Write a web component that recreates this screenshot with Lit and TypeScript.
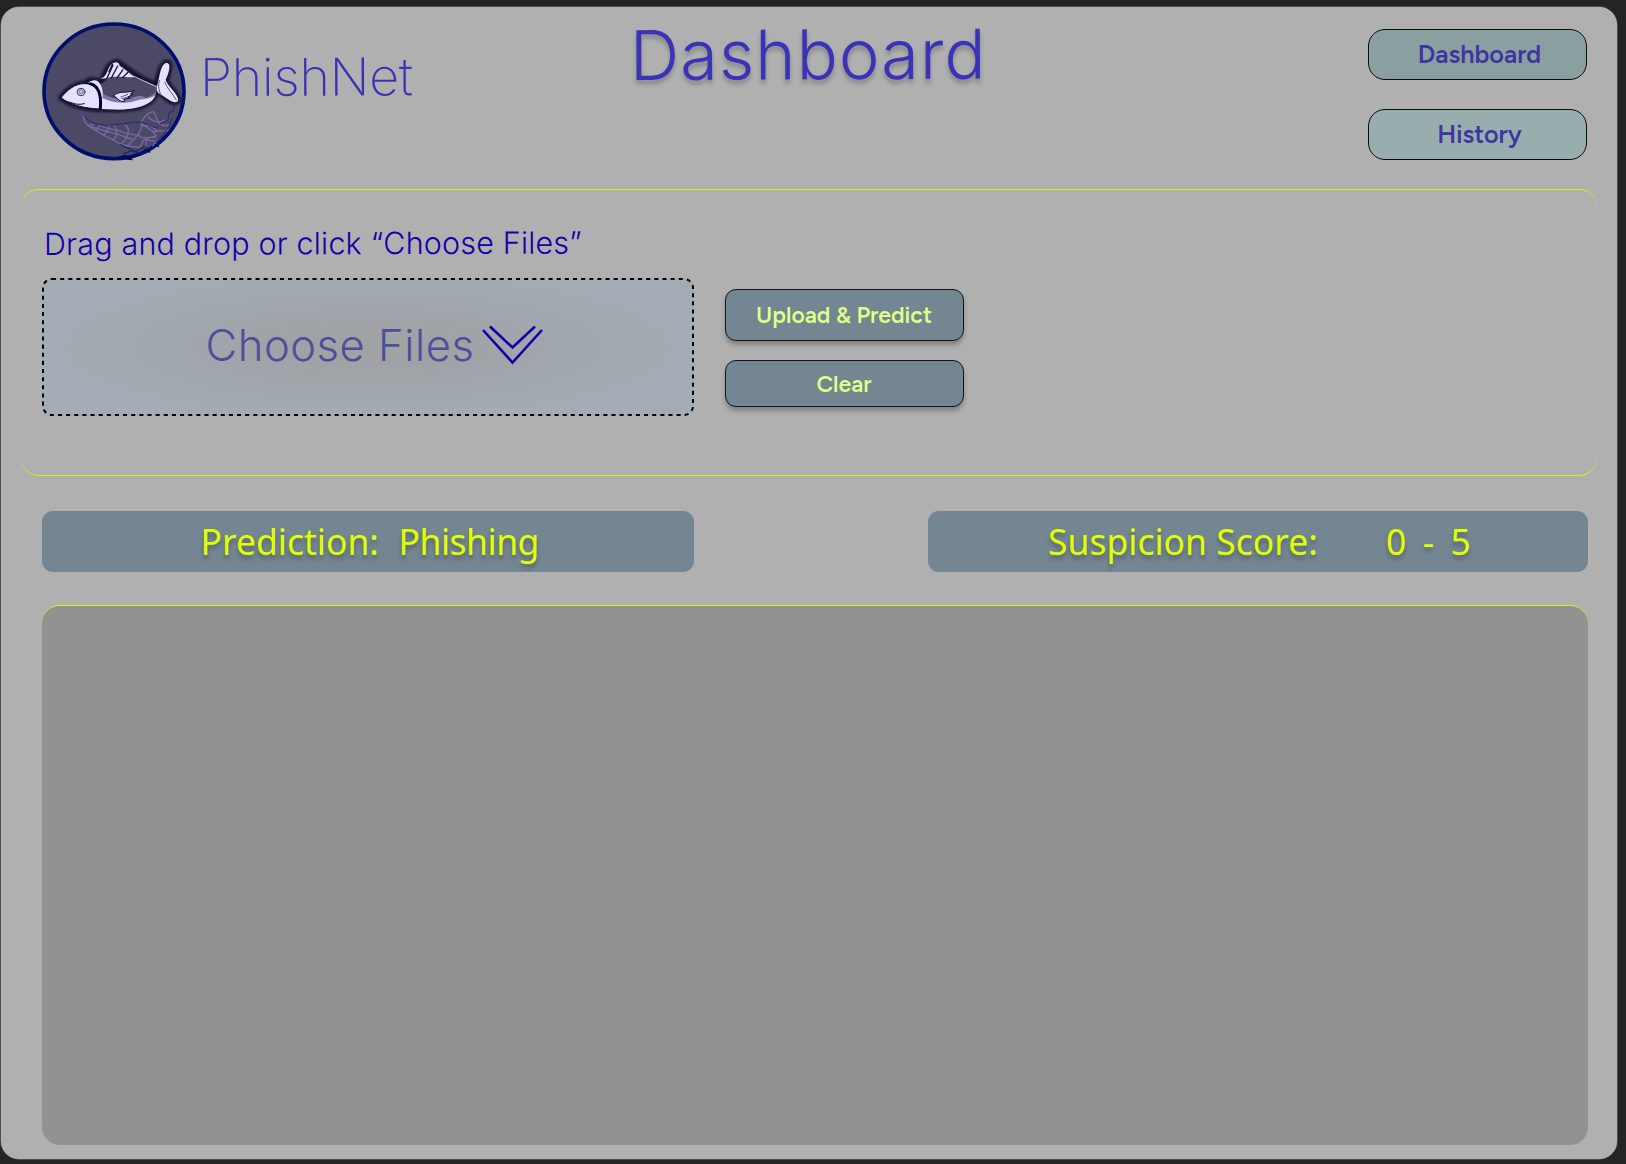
import { LitElement, html, css, svg } from "lit";
import { customElement, property } from "lit/decorators.js";

@customElement("phish-logo")
class PhishLogo extends LitElement {
  static styles = css`
    :host { display: block; width: 155px; height: 150px; }
    svg { display: block; overflow: visible; }
  `;
  render() {
    // Drawn on a 465 x 450 grid, three units to the pixel.
    return html`<svg width="155" height="150" viewBox="0 0 465 450" fill="none" stroke-linecap="round" stroke-linejoin="round">
      <defs>
        <filter id="soft" x="-20%" y="-20%" width="140%" height="140%"><feGaussianBlur stdDeviation="4" /></filter>
      </defs>
      <ellipse cx="237" cy="229" rx="210" ry="202" fill="#4b4965" stroke="#000f6e" stroke-width="11" />
      <g stroke="#080825" stroke-width="15" filter="url(#soft)">
        <path d="M78 248C96 226 120 206 150 205C164 192 184 192 198 206L204 190C214 172 214 150 246 140L268 154C282 166 302 178 320 190L362 210C370 192 375 150 394 142C410 142 402 162 394 196C404 222 428 236 431 256C420 268 402 258 386 242L366 226C362 250 340 268 312 276C270 286 230 284 196 282C150 280 104 268 78 248Z" />
      </g>
      ${svg`
      <path d="M196 206C250 180 320 186 364 214L364 238C340 262 250 262 200 240Z" fill="#4b4965"/>
      <path d="M200 234C230 252 255 255 286 252C304 240 320 242 334 248C346 244 358 238 364 226C362 250 340 268 312 276C276 286 236 284 200 282Z" fill="#8177a8"/>
      <path d="M200 248C228 262 270 268 300 258C322 250 344 254 362 240C354 260 334 270 312 276C276 286 236 284 200 282Z" fill="#e4e2ff"/>
      <path d="M78 248C96 226 120 204 152 206C172 206 190 222 194 244C197 260 194 274 192 282C150 280 104 270 78 248Z" fill="#e4e2ff" stroke="#080825" stroke-width="3"/>
      <path d="M160 203C178 190 190 196 197 210C206 226 204 246 200 254C197 230 184 208 160 203Z" fill="#e4e2ff"/>
      <path d="M166 206C188 210 200 236 196 280" stroke="#080825" stroke-width="9"/>
      <path d="M92 262C108 256 116 274 148 266" stroke="#111030" stroke-width="3"/>
      <ellipse cx="138" cy="231" rx="12" ry="11" fill="#c9c4e8" stroke="#40385f" stroke-width="3"/>
      <ellipse cx="139" cy="230" rx="6" ry="6" stroke="#5e5682" stroke-width="2"/>
      <path d="M196 192L212 190C238 180 266 188 300 187C285 176 268 160 254 152C250 138 238 140 226 151C216 163 218 184 196 192Z" fill="#e4e2ff"/>
      <path d="M216 189L234 151M229 189L248 153M246 189L264 164M262 188L279 172M222 170L232 148" stroke="#17152f" stroke-width="4"/>
      <path d="M296 184L364 215" stroke="#c9c5ef" stroke-width="3"/>
      <path d="M366 213C374 190 374 151 393 143C410 142 404 168 392 195C402 220 430 236 430 258C414 270 398 250 376 238C364 232 364 222 366 213Z" fill="#e4e2ff"/>
      <path d="M374 196C369 208 370 220 376 236M389 201C398 224 414 236 424 255" stroke="#18142e" stroke-width="2"/>
      <path d="M236 242C252 226 270 236 298 227L286 237L294 238L278 246L284 249L266 253L270 258C254 264 250 250 236 242Z" fill="#e4e2ff" stroke="#111030" stroke-width="3"/>
      <path d="M258 246L278 238M260 251L276 247" stroke="#18142e" stroke-width="2"/>
      <g stroke="#7969a2" stroke-width="4">
        <path d="M138 291C148 300 144 320 158 331C188 354 220 368 257 386L278 393L312 397"/>
        <path d="M158 330C164 329 168 331 176 330M178 344C190 350 190 330 195 329M202 359C216 362 222 333 222 328M230 374C246 374 250 346 238 332M257 386C278 374 288 342 272 331M276 393C304 370 326 342 318 324"/>
        <path d="M168 336C190 340 210 350 228 352C254 358 268 366 294 374M190 330C214 342 238 342 256 348C276 360 296 356 312 362C326 376 350 364 362 366"/>
        <path d="M318 324C326 310 334 294 354 290C366 298 362 320 376 326C386 334 394 334 402 328M318 324C334 342 358 344 362 362C350 370 334 366 326 376L314 397M340 305C350 322 378 324 390 315M322 332C340 330 352 332 366 350M334 375L358 378M334 375L332 393M358 350C374 342 390 354 400 344M354 393L368 374"/>
      </g>
      <g stroke="#24277d" stroke-width="3">
        <path d="M138 291C150 312 174 328 202 330C236 334 286 318 320 322C340 326 354 342 368 336M418 270L414 290L402 292L400 314L376 326M412 310C400 318 410 338 392 346C386 370 354 374 368 388"/>
      </g>
      <path d="M257 388C268 400 290 398 298 412L328 396L348 404L366 384M266 416L296 406L310 416L338 410" stroke="#0b1675" stroke-width="3"/>
      <path d="M252 427L272 422L288 433M290 424L316 420M330 404L344 411M360 390L370 394M268 430L290 433" stroke="#00095a" stroke-width="5"/>
      `}
    </svg>`;
  }
}

@customElement("nav-button")
class NavButton extends LitElement {
  @property() label = "";
  static styles = css`
    :host { display: block; }
    .btn {
      box-sizing: border-box; width: 219px; height: 51px; padding: 0 0 1px;
      display: flex; align-items: center; justify-content: center;
      border: 1px solid #080c0c; border-radius: 17px;
      background: #98adae; color: #4035a0;
      font: 600 25.2px/30px Figtree, Inter, "Liberation Sans", sans-serif;
    }
    :host([active]) .btn { background: #8a9fa0; padding-bottom: 2px; }
    .text { padding-left: 4px; }
  `;
  render() {
    return html`<button class="btn"><span class="text">${this.label}</span></button>`;
  }
}

@customElement("app-root")
class AppRoot extends LitElement {
  static styles = css`
    :host {
      display: block; box-sizing: border-box; width: 1626px; height: 1164px;
      padding: 7px 9px 5px 1px; background: #242424; overflow: hidden;
      font-family: Inter, "Liberation Sans", sans-serif;
    }
    .frame {
      box-sizing: border-box; width: 1615.5px; height: 1152px; padding: 0 19.500px 0 20px;
      background: #b0b0b0; border-radius: 18px; box-shadow: 0 0 0 0.5px #777;
    }
    .header { height: 182px; display: grid; grid-template-columns: 594px 1fr 229px; }
    .brand { display: flex; padding: 8px 0 0 14px; }
    .name {
      margin-left: 10px; margin-top: 30.500px; font-weight: 200; font-size: 52px; line-height: 64px; letter-spacing: -0.25px;
      color: #3b31b5; white-space: nowrap; transform: rotate(-0.2deg); transform-origin: 0 50%;
    }
    .title {
      margin: 9px 0 0 14.500px; font-weight: 300; font-size: 68.5px; line-height: 80px; color: #3b32b8;
      letter-spacing: 1.05px; white-space: nowrap; text-shadow: 0 4px 4px rgba(0, 0, 0, 0.25);
      transform: rotate(-0.25deg); transform-origin: 0 50%;
    }
    .nav { display: flex; flex-direction: column; gap: 29px; padding-top: 22px; }
    .upload {
      box-sizing: border-box; height: 287px; padding: 35.500px 20.500px 0;
      border: 0 solid #dcf00c; border-top-width: 1px; border-bottom-width: 1px; border-radius: 18px;
    }
    .hint {
      margin: 0 0 0 2px; width: max-content; height: 52.500px; font-weight: 300; font-size: 30.5px; line-height: 36px;
      letter-spacing: 0.17px;
      color: #1400a8; transform: rotate(-0.15deg); transform-origin: 0 50%; white-space: nowrap;
    }
    .row { display: flex; align-items: flex-start; }
    .drop {
      display: grid; width: 652px; height: 138px; border-radius: 12px;
      background: radial-gradient(ellipse 326px 76px at 50% 50%, #a0a3a3 0%, #a0a3a5 25%, #a1a7af 62%, #a3acb4 100%);
    }
    .drop > * { grid-area: 1 / 1; }
    .outline { display: block; }
    .choose { display: flex; padding: 40px 0 0 164px; align-items: flex-start; }
    .choose-text {
      width: 276px; font-size: 43.5px; line-height: 54px; letter-spacing: 0.55px; color: #4f4e9b;
      font-weight: 300; white-space: nowrap;
    }
    .chevron { display: block; margin-top: 7px; }
    .actions { display: flex; flex-direction: column; gap: 19px; margin: 11px 0 0 31px; }
    .action {
      box-sizing: border-box; width: 239px; height: 52px; border: 1px solid #10161a; border-radius: 11px;
      background: #738692; color: #dfff86; padding: 0; box-shadow: 0 4px 4px rgba(0, 0, 0, 0.25);
      font: 600 23px/28px Figtree, Inter, "Liberation Sans", sans-serif;
    }
    .action.clear { height: 47px; }
    .results { display: flex; justify-content: space-between; padding: 35px 9px 0 20.5px; height: 129px; box-sizing: border-box; }
    .bar {
      box-sizing: border-box; height: 61px; border-radius: 11px; background: #738692; color: #e0ff00;
      display: flex; font: 400 35.5px/60px "Noto Sans", sans-serif; white-space: pre;
      text-shadow: 0 4px 4px rgba(0, 0, 0, 0.25);
    }
    .bar.prediction { width: 652px; padding-left: 159px; }
    .bar.score { width: 660px; padding-left: 120px; }
    .label-p { width: 198px; }
    .label-s { width: 338px; }
    .verdict { letter-spacing: -0.5px; }
    .range { word-spacing: 6.500px; letter-spacing: 0.3px; }
    .panel {
      box-sizing: border-box; margin: 0 9px 0 20.5px; height: 540px; background: #929292;
      border-top: 1px solid #dcf00c; border-radius: 18px;
    }
  `;
  render() {
    return html`
      <main class="frame">
        <header class="header">
          <div class="brand"><phish-logo></phish-logo><span class="name">PhishNet</span></div>
          <div class="title">Dashboard</div>
          <nav class="nav">
            <nav-button active label="Dashboard"></nav-button>
            <nav-button label="History"></nav-button>
          </nav>
        </header>
        <section class="upload">
          <p class="hint">Drag and drop or click “Choose Files”</p>
          <div class="row">
            <div class="drop">
              <svg class="outline" width="652" height="138" fill="none" stroke="#000" stroke-width="2">
                <rect x="1" y="1" width="650" height="136" rx="9" stroke-dasharray="4.07 4.07" />
              </svg>
              <div class="choose">
                <span class="choose-text">Choose Files</span>
                <svg class="chevron" width="62" height="40" viewBox="0 0 62 40" fill="none" stroke="#1400a8" stroke-width="2.6">
                  <path d="M1 5L30.5 37.5L60 5M8 1.500L30.500 22.500L53 1.500" />
                </svg>
              </div>
            </div>
            <div class="actions">
              <button class="action">Upload &amp; Predict</button>
              <button class="action clear">Clear</button>
            </div>
          </div>
        </section>
        <section class="results">
          <div class="bar prediction"><span class="label-p">Prediction:</span><span class="verdict">Phishing</span></div>
          <div class="bar score"><span class="label-s">Suspicion Score:</span><span class="range">0 - 5</span></div>
        </section>
        <section class="panel"></section>
      </main>
    `;
  }
}
